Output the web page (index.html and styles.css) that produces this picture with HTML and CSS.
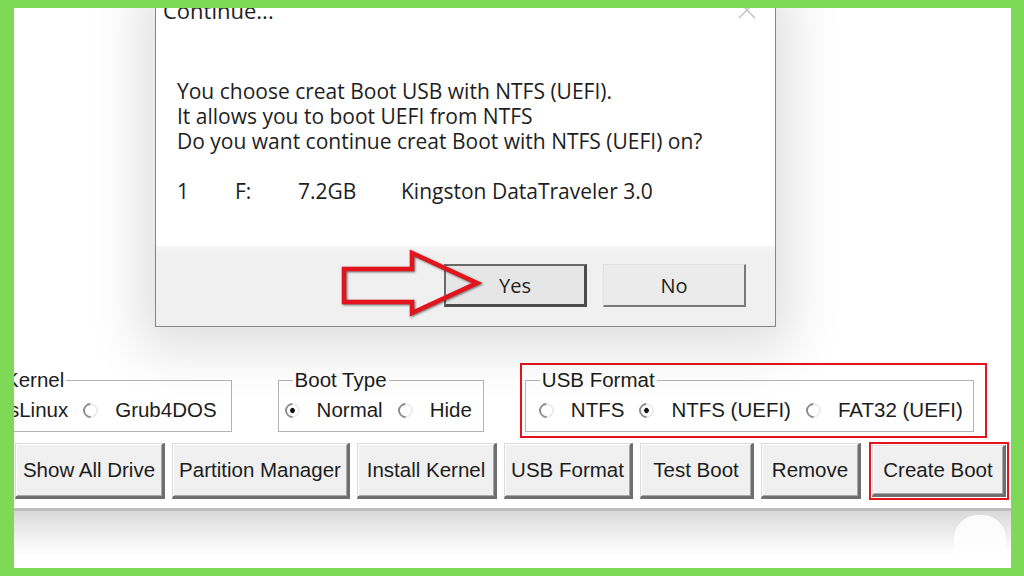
FILE: index.html
```html
<!DOCTYPE html>
<html>
<head>
<meta charset="utf-8">
<title>Continue...</title>
<link rel="stylesheet" href="styles.css">
</head>
<body>
<div class="frame">
  <div class="app">
    <div class="groups">
      <fieldset class="group group-kernel">
        <legend class="legend-kernel">Kernel</legend>
        <div class="options">
          <label class="opt"><span class="radio"></span>SysLinux</label>
          <label class="opt"><span class="radio"></span>Grub4DOS</label>
        </div>
      </fieldset>
      <fieldset class="group group-boot">
        <legend>Boot Type</legend>
        <div class="options">
          <label class="opt"><span class="radio checked"></span>Normal</label>
          <label class="opt"><span class="radio"></span>Hide</label>
        </div>
      </fieldset>
      <div class="highlight highlight-usb">
        <fieldset class="group group-usb">
          <legend>USB Format</legend>
          <div class="options">
            <label class="opt"><span class="radio"></span>NTFS</label>
            <label class="opt"><span class="radio checked"></span>NTFS (UEFI)</label>
            <label class="opt"><span class="radio"></span>FAT32 (UEFI)</label>
          </div>
        </fieldset>
      </div>
    </div>
    <div class="buttons">
      <button class="btn w-show">Show All Drive</button>
      <button class="btn w-part">Partition Manager</button>
      <button class="btn w-inst">Install Kernel</button>
      <button class="btn w-usb">USB Format</button>
      <button class="btn w-test">Test Boot</button>
      <button class="btn w-rem">Remove</button>
      <div class="highlight highlight-create">
        <button class="btn w-create">Create Boot</button>
      </div>
    </div>
    <div class="bottom-strip"><span class="blob"></span></div>
  </div>

  <div class="dialog">
    <div class="titlebar">
      <span class="title">Continue...</span>
      <svg class="close" width="20" height="20" viewBox="0 0 20 20"><path d="M2 2 L18 18 M18 2 L2 18" stroke="#bdbdbd" stroke-width="1.3" fill="none"/></svg>
    </div>
    <div class="message">
      <p>You choose creat Boot USB with NTFS (UEFI).</p>
      <p>It allows you to boot UEFI from NTFS</p>
      <p>Do you want continue creat Boot with NTFS (UEFI) on?</p>
      <div class="drive-row">
        <span class="c-num">1</span>
        <span class="c-letter">F:</span>
        <span class="c-size">7.2GB</span>
        <span class="c-name">Kingston DataTraveler 3.0</span>
      </div>
    </div>
    <div class="dlg-footer">
      <button class="dbtn default">Yes</button>
      <button class="dbtn">No</button>
    </div>
  </div>

  <svg class="arrow" width="145" height="72" viewBox="0 0 145 72">
    <path d="M4 20 L72 20 L72 4 L137 34 L72 64 L72 53 L4 53 Z" fill="none" stroke="#e3141c" stroke-width="4.5" stroke-linejoin="miter"/>
  </svg>
</div>
</body>
</html>
```

FILE: styles.css
```css
html, body {
  margin: 0;
  padding: 0;
  background: #7ed957;
}

.frame {
  width: 1024px;
  height: 576px;
  box-sizing: border-box;
  border-style: solid;
  border-color: #7ed957;
  border-width: 8px 13px 8px 14px;
  background: #ffffff;
  position: relative;
  overflow: hidden;
  font-family: "Liberation Sans", Arial, sans-serif;
  color: #1c1c1c;
}

.app {
  height: 100%;
  display: flex;
  flex-direction: column;
  padding-top: 355px;
  box-sizing: border-box;
}

/* ---------- group boxes ---------- */
.groups {
  display: flex;
  align-items: center;
  height: 75px;
}

.group {
  margin: 0;
  padding: 0;
  border: 1px solid #b4b4b4;
  min-width: 0;
  font-size: 20.5px;
}

.group legend {
  font-size: 20.5px;
  line-height: 22px;
  padding: 0 2px;
  margin-left: 14px;
  color: #1c1c1c;
}

.group .legend-kernel {
  margin-left: 56px;
}

.options {
  display: flex;
  align-items: center;
  gap: 15px;
  height: 24px;
  padding: 7px 0 9px 6px;
  line-height: 24px;
}

.group-kernel {
  margin-left: -68px;
  margin-right: 46px;
}
.group-kernel .options { padding-right: 14px; }

.group-boot {
  margin-right: 36px;
}
.group-boot .options { padding-right: 11px; }

.group-usb .options {
  padding-left: 13px;
  padding-right: 10px;
}

.opt {
  display: flex;
  align-items: center;
  gap: 17px;
  white-space: nowrap;
}

.radio {
  width: 15px;
  height: 15px;
  box-sizing: border-box;
  border-radius: 50%;
  border: 2px solid;
  border-color: #8c8c8c #ececec #ececec #8c8c8c;
  transform: rotate(-45deg);
  background: #fff;
  position: relative;
  flex: none;
}

.radio.checked::after {
  content: "";
  position: absolute;
  left: 3px;
  top: 3px;
  width: 5px;
  height: 5px;
  border-radius: 50%;
  background: #111;
}

.highlight {
  border: 2px solid #e3141c;
}

.highlight-usb {
  padding: 4px 11px 4px 3px;
}

/* ---------- button row ---------- */
.buttons {
  display: flex;
  align-items: center;
  gap: 7px;
  margin-top: 5px;
  height: 56px;
}

.btn {
  height: 56px;
  box-sizing: border-box;
  font-family: "Liberation Sans", Arial, sans-serif;
  font-size: 20.5px;
  color: #1c1c1c;
  background: #f0f0f0;
  border-style: solid;
  border-width: 1px 3px 3px 1px;
  border-color: #dadada #6f6f6f #6f6f6f #dadada;
  box-shadow: inset 1px 1px 0 #ffffff, inset -1px -1px 0 #a8a8a8;
  padding: 0;
  text-align: center;
  flex: none;
}

.w-show { width: 150px; margin-left: 1px; }
.w-part { width: 178px; }
.w-inst { width: 140px; }
.w-usb { width: 129px; }
.w-test { width: 114px; }
.w-rem { width: 100px; }
.w-create { width: 134px; height: 52px; display: block; }

.highlight-create {
  margin-left: 1px;
  padding: 1px;
}

.bottom-strip {
  margin-top: 9px;
  flex: 1;
  border-top: 3px solid #bdbdbd;
  background: linear-gradient(#d9d9d9, #f3f3f3 28px, #ffffff 45px);
  display: flex;
  justify-content: flex-end;
  align-items: flex-start;
}

.blob {
  width: 52px;
  height: 40px;
  margin-top: 4px;
  margin-right: 5px;
  border-radius: 24px 24px 6px 6px;
  background: linear-gradient(#fbfbfb, #ffffff);
}

/* ---------- dialog ---------- */
.dialog {
  position: absolute;
  left: 141px;
  top: -19px;
  width: 621px;
  box-sizing: border-box;
  border: 1px solid #858585;
  background: #ffffff;
  box-shadow: 0 8px 50px 14px rgba(0, 0, 0, 0.13);
  font-family: "Open Sans", "Noto Sans", sans-serif;
  color: #1e1e1e;
}

.titlebar {
  height: 40px;
  display: flex;
  align-items: center;
  justify-content: space-between;
  padding: 0 18px 0 7px;
}

.title {
  font-size: 22px;
  color: #1e1e1e;
}

.message {
  padding: 49px 0 42px 21px;
  font-size: 21px;
  line-height: 25px;
}

.message p {
  margin: 0;
}

.drive-row {
  display: flex;
  margin-top: 25px;
}

.c-num { width: 58px; }
.c-letter { width: 63px; }
.c-size { width: 103px; }

.dlg-footer {
  height: 80px;
  box-sizing: border-box;
  background: linear-gradient(#f5f5f5, #f0f0f0 10px);
  display: flex;
  justify-content: flex-end;
  gap: 16px;
  padding: 18px 29px 0 0;
}

.dbtn {
  width: 143px;
  height: 43px;
  box-sizing: border-box;
  font-family: "Open Sans", "Noto Sans", sans-serif;
  font-size: 20px;
  color: #1e1e1e;
  background: #ebebeb;
  border-style: solid;
  border-width: 1px 2px 2px 1px;
  border-color: #e2e2e2 #7a7a7a #7a7a7a #e2e2e2;
  padding: 0;
}

.dbtn.default {
  background: #e6e6e6;
  border-width: 2px 3px 3px 2px;
  border-color: #6a6a6a #4c4c4c #4c4c4c #6a6a6a;
}

/* ---------- annotation arrow ---------- */
.arrow {
  position: absolute;
  left: 326px;
  top: 241px;
  filter: drop-shadow(1.5px 1.5px 0.8px rgba(0, 0, 0, 0.55));
}
```
